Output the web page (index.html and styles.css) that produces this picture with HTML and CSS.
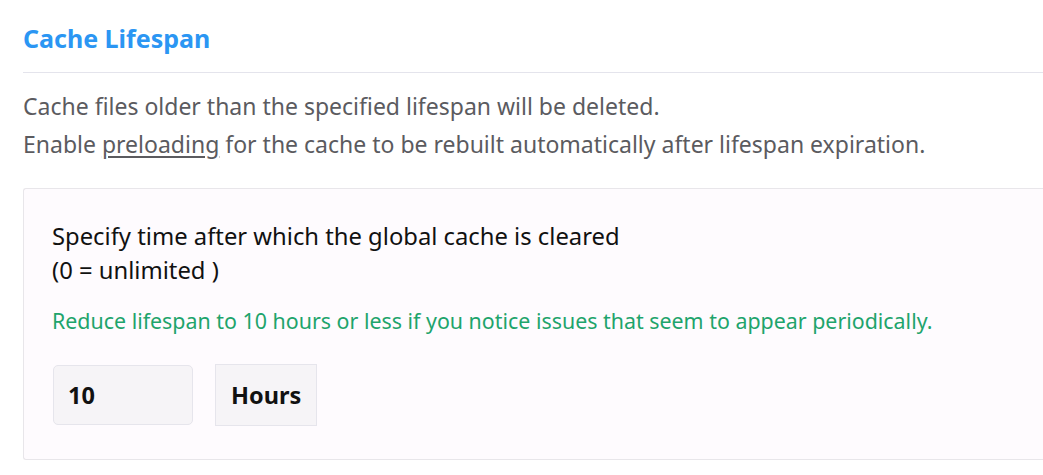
FILE: index.html
```html
<!DOCTYPE html>
<html>
<head>
<meta charset="utf-8">
<link rel="stylesheet" href="styles.css">
</head>
<body>
<div class="page">
  <h2 class="title">Cache Lifespan</h2>
  <div class="desc">
    <p>Cache files older than the specified lifespan will be deleted.</p>
    <p>Enable <a href="#" class="link">preloading</a> for the cache to be rebuilt automatically after lifespan expiration.</p>
  </div>
  <div class="card">
    <div class="label">Specify time after which the global cache is cleared<br>(0 = unlimited )</div>
    <div class="hint">Reduce lifespan to 10 hours or less if you notice issues that seem to appear periodically.</div>
    <div class="controls">
      <div class="input">10</div>
      <div class="unit">Hours</div>
    </div>
  </div>
</div>
</body>
</html>
```

FILE: styles.css
```css
html, body {
  margin: 0;
  padding: 0;
  background: #ffffff;
}
body {
  font-family: "Noto Sans", "Open Sans", sans-serif;
  overflow: hidden;
}
.page {
  padding: 20px 0 0 23px;
}
.title {
  margin: 0;
  font-size: 25px;
  font-weight: 700;
  color: #2b96f3;
  line-height: 36px;
  padding-bottom: 16px;
  border-bottom: 1px solid #e4e4ec;
}
.desc {
  padding-top: 14px;
  color: #5b5b5f;
  font-size: 23px;
  line-height: 38px;
}
.desc p {
  margin: 0;
  line-height: 38px;
}
.link {
  color: #5b5b5f;
  text-decoration: underline;
  text-underline-offset: 3px;
}
.card {
  margin-top: 25px;
  background: #fefbfe;
  border: 1px solid #e8e6ea;
  border-right: none;
  border-radius: 3px 0 0 3px;
  padding: 30px 0 33px 28px;
}
.label {
  font-size: 23.8px;
  line-height: 34px;
  color: #111;
}
.hint {
  margin-top: 19px;
  font-size: 21.4px;
  line-height: 30px;
  color: #1ea46c;
}
.controls {
  display: flex;
  align-items: center;
  gap: 22px;
  margin-top: 28px;
  padding-left: 1px;
}
.input {
  width: 124px;
  height: 58px;
  padding-left: 14px;
  background: #f6f4f7;
  border: 1px solid #e6e5ec;
  border-radius: 5px;
  font-size: 23.5px;
  font-weight: 700;
  line-height: 58px;
  color: #111;
}
.unit {
  height: 60px;
  padding: 0 15px;
  background: #f6f4f7;
  border: 1px solid #e6e5ec;
  font-size: 23.5px;
  font-weight: 700;
  line-height: 60px;
  color: #111;
}
```
